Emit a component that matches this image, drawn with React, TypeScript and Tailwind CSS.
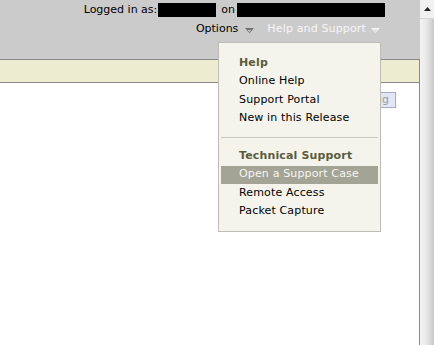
import React from 'react';

// small down-pointing marker used next to the header menus
function MenuArrow({ light }: { light?: boolean }) {
  const stroke = light ? '#f4f4f4' : '#6b6b6b';
  const fill = light ? '#dcdcdc' : '#b8b8b8';
  return (
    <svg
      width="9"
      height="6"
      viewBox="0 0 9 6"
      className={light ? 'ml-[5px] mt-[3px]' : 'ml-[7px] mt-[3px]'}
    >
      <path d="M0.5 0.5 H8.5" stroke={stroke} strokeWidth="1" />
      <path d="M1.5 1.5 L7.5 1.5 L4.5 4.8 Z" fill={fill} stroke={stroke} strokeWidth="0.8" />
    </svg>
  );
}

const helpItems = ['Online Help', 'Support Portal', 'New in this Release'];
const supportItems = ['Open a Support Case', 'Remote Access', 'Packet Capture'];

export default function App() {
  return (
    <div
      className="relative flex h-[345px] w-[434px] overflow-hidden bg-white text-[11px] text-black"
      style={{ fontFamily: '"DejaVu Sans", Verdana, sans-serif' }}
    >
      {/* Page */}
      <div className="flex w-[420px] flex-col">
        {/* Header */}
        <div className="h-[60px] border-b border-[#8a8a8a] bg-[#cccbcc]">
          <div className="flex h-[19px] items-center justify-end pr-[35px] pt-[1px]">
            <span>Logged in as:</span>
            <span className="ml-[1px] h-[14px] w-[58px] bg-black" />
            <span className="ml-[5px]">on</span>
            <span className="ml-[2px] h-[14px] w-[148px] bg-black" />
          </div>
          <div className="mt-[2px] flex h-[17px] items-center justify-end pr-[40px]">
            <span className="flex items-center">
              Options
              <MenuArrow />
            </span>
            <span className="ml-[13px] flex items-center tracking-[0.15px] text-[#f6f6f6]">
              Help and Support
              <MenuArrow light />
            </span>
          </div>
        </div>

        {/* Body */}
        <div className="flex flex-1 flex-col border-r border-[#8a8a8a]">
          <div className="h-[23px] border-b border-[#8a8a8a] bg-[#eeecd0]" />
          <div className="flex justify-end pr-[23px] pt-[9px]">
            <button className="h-[16px] border border-[#a3abc4] bg-[#e3e7f5] px-[6px] text-[11px] leading-[14px] text-[#9a9aa8]">
              Debug
            </button>
          </div>
        </div>
      </div>

      {/* Scrollbar */}
      <div className="flex w-[14px] flex-col">
        <div className="flex h-[18px] items-center justify-center bg-[#f1f1f1]">
          <svg width="7" height="4" viewBox="0 0 7 4">
            <path d="M0 4 L3.5 0 L7 4 Z" fill="#222" />
          </svg>
        </div>
        <div className="flex-1 border-t border-[#d6d6d6] bg-[linear-gradient(to_right,#f4f4f4,#e8e8e8_45%,#d2d2d2_85%,#c6c6c6)]" />
      </div>

      {/* Help and Support dropdown */}
      <div className="absolute left-[218px] top-[42px] h-[190px] w-[163px] border border-[#bdbdb4] bg-[#f4f4ec] px-[1px] pt-[11px] tracking-[0.15px]">
        <div className="flex h-[18px] items-center pl-[19px] font-bold text-[#5b5b3c]">Help</div>
        {helpItems.map(item => (
          <div key={item} className="flex h-[18.5px] items-center pl-[19px]">
            {item}
          </div>
        ))}
        <div className="mx-[1px] mt-[9px] h-px bg-[#c9c9c0]" />
        <div className="mt-[10px] flex h-[18px] items-center pl-[19px] font-bold text-[#5b5b3c]">
          Technical Support
        </div>
        {supportItems.map((item, i) => (
          <div
            key={item}
            className={
              i === 0
                ? 'mx-[1px] flex h-[18px] items-center bg-[#a4a496] pl-[18px] text-[#f6f6f0]'
                : 'flex h-[18.5px] items-center pl-[19px]'
            }
          >
            {item}
          </div>
        ))}
      </div>
    </div>
  );
}
